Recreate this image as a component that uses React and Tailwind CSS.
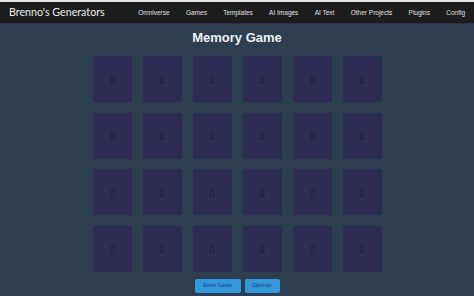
const links = ['Omniverse', 'Games', 'Templates', 'AI Images', 'AI Text', 'Other Projects', 'Plugins', 'Config']

export default function App() {
  const cards = Array.from({ length: 24 }, (_, i) => i)

  return (
    <div className="w-[474px] h-[296px] overflow-hidden bg-[#2c3e50] font-['Liberation_Sans',sans-serif]">
      <div className="h-[2px] bg-[#e5e5e5]" />
      <nav className="h-[22px] bg-[#1c1c1c] flex items-center justify-between pl-[9px] pr-[9px] border-b border-[#2a3340] whitespace-nowrap">
        <span className="shrink-0 text-[10.7px] text-[#ececec] font-['Lato',sans-serif]">Brenno's Generators</span>
        <div className="flex shrink-0 items-center gap-[16.3px] text-[6.5px] text-[#e0e0e0] font-['Liberation_Sans',sans-serif]">
          {links.map((l) => (
            <span key={l}>{l}</span>
          ))}
        </div>
      </nav>
      <h1 className="text-center text-[13px] font-bold text-[#f0f0f0] mt-[6px] leading-[16px] font-['Liberation_Sans',sans-serif]">
        Memory Game
      </h1>
      <div className="grid grid-cols-[repeat(6,39px)] gap-x-[11px] gap-y-[10.5px] justify-center mt-[10px]">
        {cards.map((i) => (
          <div key={i} className="h-[46px] bg-[#2e2c52] flex items-center justify-center">
            <span className="text-[10px] text-[#15152e] font-['DejaVu_Sans',sans-serif]">▯</span>
          </div>
        ))}
      </div>
      <div className="flex justify-center gap-[4px] mt-[7px]">
        <button className="w-[46px] h-[14px] bg-[#3498db] text-[6px] text-[#1a3a8a] rounded-[2px] font-['Liberation_Serif',serif]">
          Reset Game
        </button>
        <button className="w-[35px] h-[14px] bg-[#3498db] text-[6px] text-[#1a3a6a] rounded-[2px] font-['Liberation_Serif',serif]">
          Options
        </button>
      </div>
    </div>
  )
}
